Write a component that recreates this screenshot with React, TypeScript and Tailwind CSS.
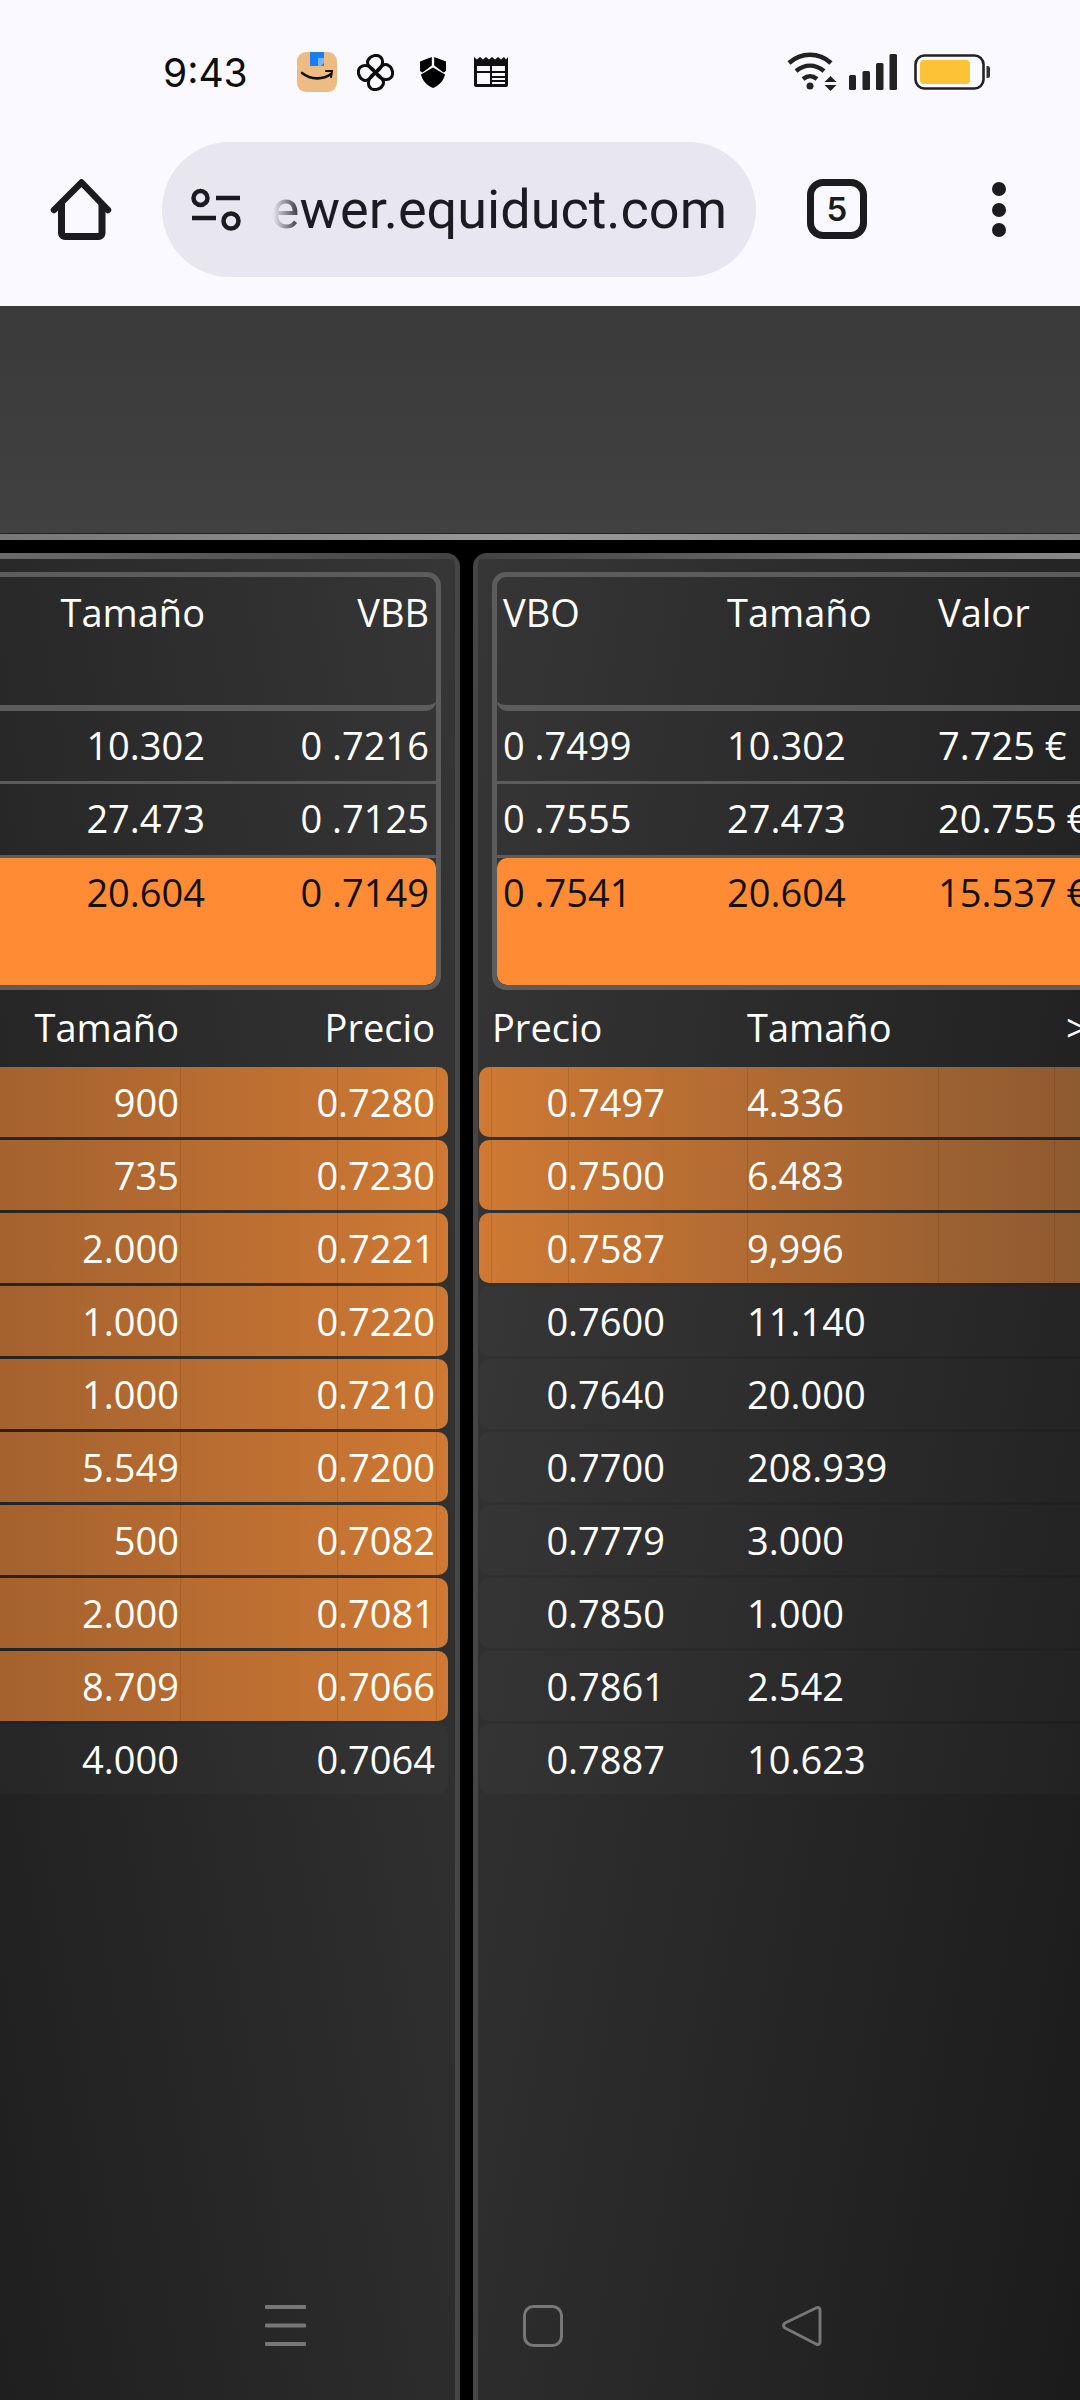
import type { ReactNode } from "react";
import clsx from "clsx";

const FONT = "font-['Open_Sans',sans-serif]";

const bids = [
  ["900", "0.7280"],
  ["735", "0.7230"],
  ["2.000", "0.7221"],
  ["1.000", "0.7220"],
  ["1.000", "0.7210"],
  ["5.549", "0.7200"],
  ["500", "0.7082"],
  ["2.000", "0.7081"],
  ["8.709", "0.7066"],
  ["4.000", "0.7064"],
];

const asks = [
  ["0.7497", "4.336"],
  ["0.7500", "6.483"],
  ["0.7587", "9,996"],
  ["0.7600", "11.140"],
  ["0.7640", "20.000"],
  ["0.7700", "208.939"],
  ["0.7779", "3.000"],
  ["0.7850", "1.000"],
  ["0.7861", "2.542"],
  ["0.7887", "10.623"],
];

const leftTop = [
  ["10.302", "0 .7216"],
  ["27.473", "0 .7125"],
  ["20.604", "0 .7149"],
];

const rightTop = [
  ["0 .7499", "10.302", "7.725 €"],
  ["0 .7555", "27.473", "20.755 €"],
  ["0 .7541", "20.604", "15.537 €"],
];

const BID_LINES = ["left-[180px]", "left-[337px]", "left-[436px]"];
const ASK_LINES = ["left-[12px]", "left-[89px]", "left-[268px]", "left-[459px]", "left-[575px]"];

function StatusBar() {
  return (
    <div className="flex h-[140px] items-center bg-[#f9f9ff] pl-[163px] pt-[4px]">
      <span className="w-[134px] font-['Inter',sans-serif] text-[39px] leading-none text-[#0d0d0d]">9:43</span>
      <svg width="40" height="40" viewBox="0 0 40 40" className="mr-[20px]">
        <rect width="40" height="40" rx="9" fill="#eebc82" />
        <path d="M13 0h14v14h-14z" fill="#1a7df0" />
        <path d="M21 6h6v5l-3 3h-3z" fill="#7db4f8" />
        <path d="M5 21c9 7 21 7 29 1" fill="none" stroke="#111" strokeWidth="2.6" strokeLinecap="round" />
        <path d="M29 19l6 0-1 6" fill="none" stroke="#111" strokeWidth="2" strokeLinecap="round" />
      </svg>
      <svg width="37" height="37" viewBox="0 0 37 37" fill="none" stroke="#0d0d0d" strokeWidth="3" className="mr-[26px]">
        {[0, 90, 180, 270].map((deg) => (
          <path
            key={deg}
            d="M0 0C-6-5-10-9-7-13C-5-17 2-18.500 5-15.500C9-12 7-4 0 0z"
            transform={`translate(18.5 18.5) rotate(${deg})`}
            strokeLinejoin="round"
          />
        ))}
      </svg>
      <svg width="26" height="31" viewBox="0 0 26 31" className="mr-[28px]">
        <path d="M0 4.500 11.800 0v8.500L2.500 15.500 0 14z M14.200 0 26 4.500V14l-2.500 1.500-9.300-7z" fill="#000" />
        <path d="M1 17.500 13 10.500l12 7C23.500 24 19 28.500 13 31 7 28.500 2.500 24 1 17.500z" fill="#000" />
      </svg>
      <svg width="34" height="30" viewBox="0 0 34 30">
        <path d="M0 0 3 2.500 6 0l3 2.500L12 0l3 2.500L18 0l3 2.500L24 0l3 2.500L30 0l2 2.500L34 0v28a2 2 0 0 1-2 2H2a2 2 0 0 1-2-2z" fill="#111" />
        <rect x="3" y="9" width="28" height="18" fill="#f9f9ff" />
        <rect x="3" y="14" width="28" height="2" fill="#111" />
        <rect x="16" y="9" width="2" height="18" fill="#111" />
        <rect x="18" y="19" width="13" height="2" fill="#111" />
        <rect x="18" y="23" width="13" height="2" fill="#111" />
      </svg>
      <div className="ml-[279px] flex items-center">
        <svg width="50" height="40" viewBox="0 0 50 40" className="mr-[12px]" fill="none" stroke="#222" strokeWidth="4.5">
          <path d="M2 11C14 0 32 0 44 11" />
          <path d="M9 19c9-7 19-7 28 0" />
          <path d="M16 27c5-4 9-4 14 0" />
          <circle cx="23" cy="34" r="3.5" fill="#222" stroke="none" />
          <path d="M43.500 24l6 6h-12z M37.500 33h12l-6 6z" fill="#222" stroke="none" />
        </svg>
        <svg width="48" height="36" viewBox="0 0 48 36" className="mr-[17px]" fill="#222">
          <rect x="0" y="21" width="7" height="15" rx="1.5" />
          <rect x="13.5" y="17" width="7.5" height="19" rx="1.5" />
          <rect x="27" y="9" width="7.5" height="27" rx="1.5" />
          <rect x="40.5" y="0" width="7.5" height="36" rx="1.5" />
        </svg>
        <svg width="76" height="36" viewBox="0 0 76 36">
          <rect x="1.5" y="1.5" width="68" height="33" rx="9" fill="none" stroke="#222" strokeWidth="2.6" />
          <rect x="6" y="6" width="50" height="24" rx="4" fill="#fdc336" />
          <path d="M72.500 12h1a2.500 2.500 0 0 1 2.500 2.500v7a2.500 2.500 0 0 1-2.500 2.500h-1z" fill="#333" />
        </svg>
      </div>
    </div>
  );
}

function BrowserBar() {
  return (
    <div className="flex h-[166px] items-start bg-[#f9f9ff] pl-[50px] pt-[2px]">
      <svg width="62" height="64" viewBox="0 0 62 64" className="mr-[50px] mt-[36px]">
        <path d="M31.500 4.500 4 32M31.500 4.500 58 32" fill="none" stroke="#1b1b20" strokeWidth="6.5" strokeLinecap="round" />
        <path d="M11.500 26v29a3.500 3.500 0 0 0 3.500 3.500h33.500a3.500 3.500 0 0 0 3.500-3.500V26" fill="none" stroke="#1b1b20" strokeWidth="7" />
      </svg>
      <div className="flex h-[135px] w-[594px] items-center rounded-full bg-[#e8e6f0] pl-[29px]">
        <svg width="50" height="44" viewBox="0 0 50 44" className="mr-[32px] shrink-0" fill="none" stroke="#1b1b20" strokeWidth="4.5">
          <circle cx="9.5" cy="10" r="7" />
          <path d="M25 10h24" />
          <path d="M1 30h24" />
          <circle cx="40" cy="33" r="7.5" />
        </svg>
        <div className="relative flex w-[454px] shrink-0 justify-end overflow-hidden whitespace-nowrap font-['Roboto',sans-serif] text-[54px] leading-[64px] text-[#1c1b21]">
          <span className="shrink-0">ewer.equiduct.com</span>
          <div className="absolute inset-y-0 left-0 w-[30px] bg-gradient-to-r from-[#e8e6f0] to-transparent" />
        </div>
      </div>
      <div className="ml-[51px] mt-[37px] flex h-[60px] w-[60px] items-center justify-center rounded-[16px] border-[7px] border-[#1b1b20] font-['Inter',sans-serif] text-[33px] font-semibold text-[#1b1b20]">
        5
      </div>
      <div className="ml-[125px] mt-[40px] flex flex-col gap-[6.5px]">
        <span className="h-[14px] w-[14px] rounded-full bg-[#1b1b20]" />
        <span className="h-[14px] w-[14px] rounded-full bg-[#1b1b20]" />
        <span className="h-[14px] w-[14px] rounded-full bg-[#1b1b20]" />
      </div>
    </div>
  );
}

function Cell({ className, children }: { className?: string; children?: ReactNode }) {
  return <div className={clsx("shrink-0 whitespace-nowrap", className)}>{children}</div>;
}

function RowLines({ lines }: { lines: string[] }) {
  return (
    <>
      {lines.map((pos) => (
        <span key={pos} className={clsx("absolute inset-y-0 w-px bg-black/10", pos)} />
      ))}
    </>
  );
}

function LeftPanel() {
  return (
    <div className="flex h-full w-[460px] shrink-0 flex-col overflow-hidden rounded-tr-[14px] border-r-[5px] border-[#454545] bg-[linear-gradient(80deg,#1f1f1f,#363636)]">
      <div className="h-[6px] shrink-0 bg-gradient-to-r from-[#6a6a6a] to-[#434343]" />
      <div className="mr-[14px] mt-[13px] overflow-hidden rounded-r-[14px] border-y-[5px] border-r-[5px] border-[#5c5c5c]">
        <div className="flex h-[134px] rounded-br-[10px] border-b-[6px] border-[#5c5c5c] pt-[10px]">
          <Cell className="w-[205px] text-right">Tamaño</Cell>
          <Cell className="w-[224px] text-right">VBB</Cell>
        </div>
        {leftTop.map(([size, vbb], i) => (
          <div
            key={vbb}
            className={clsx(
              "flex pt-[9px]",
              i === 0 && "h-[73px] border-b-[3px] border-[#5c5c5c]",
              i === 1 && "h-[74px] border-b-[3px] border-[#5c5c5c]",
              i === 2 && "h-[127px] rounded-r-[10px] bg-[#ff8c35] text-[#111]",
            )}
          >
            <Cell className="w-[205px] text-right">{size}</Cell>
            <Cell className="w-[224px] text-right">{vbb}</Cell>
          </div>
        ))}
      </div>
      <div className="flex h-[77px] shrink-0 items-center pb-[4px]">
        <Cell className="w-[179px] text-right">Tamaño</Cell>
        <Cell className="w-[256px] text-right">Precio</Cell>
      </div>
      <div className="mr-[7px] flex flex-col gap-[3px]">
        {bids.map(([size, price], i) => (
          <div
            key={i}
            className={clsx(
              "relative flex h-[70px] items-center overflow-hidden rounded-r-[10px]",
              i < 9 ? "bg-gradient-to-r from-[#a4622f] to-[#cf7933]" : "bg-white/[0.02]",
            )}
          >
            {i < 9 && <RowLines lines={BID_LINES} />}
            <Cell className="w-[179px] text-right">{size}</Cell>
            <Cell className="w-[256px] text-right">{price}</Cell>
          </div>
        ))}
      </div>
    </div>
  );
}

function RightPanel() {
  return (
    <div className="flex h-full min-w-0 flex-1 flex-col overflow-hidden rounded-tl-[14px] border-l-[5px] border-[#454545] bg-[linear-gradient(100deg,#363636,#1b1b1b)]">
      <div className="h-[6px] shrink-0 bg-gradient-to-r from-[#434343] to-[#8a8a8a]" />
      <div className="ml-[14px] mt-[13px] w-[800px] overflow-hidden rounded-l-[14px] border-y-[5px] border-l-[5px] border-[#5c5c5c]">
        <div className="flex h-[134px] rounded-bl-[10px] border-b-[6px] border-[#5c5c5c] pt-[10px]">
          <Cell className="w-[230px] pl-[6px]">VBO</Cell>
          <Cell className="w-[211px]">Tamaño</Cell>
          <Cell>Valor</Cell>
        </div>
        {rightTop.map(([vbo, size, value], i) => (
          <div
            key={vbo}
            className={clsx(
              "flex pt-[9px]",
              i === 0 && "h-[73px] border-b-[3px] border-[#5c5c5c]",
              i === 1 && "h-[74px] border-b-[3px] border-[#5c5c5c]",
              i === 2 && "h-[127px] rounded-l-[10px] bg-[#ff8c35] text-[#111]",
            )}
          >
            <Cell className="w-[230px] pl-[6px]">{vbo}</Cell>
            <Cell className="w-[211px]">{size}</Cell>
            <Cell>{value}</Cell>
          </div>
        ))}
      </div>
      <div className="flex h-[77px] shrink-0 items-center pb-[4px]">
        <Cell className="w-[269px] pl-[14px]">Precio</Cell>
        <Cell className="w-[319px]">Tamaño</Cell>
        <Cell>&gt;</Cell>
      </div>
      <div className="ml-[1px] flex flex-col gap-[3px]">
        {asks.map(([price, size], i) => (
          <div
            key={price}
            className={clsx(
              "relative flex h-[70px] items-center overflow-hidden rounded-l-[10px]",
              i < 3 ? "bg-gradient-to-r from-[#cf7933] to-[#8e5a30]" : "bg-white/[0.02]",
            )}
          >
            {i < 3 && <RowLines lines={ASK_LINES} />}
            <Cell className="w-[186px] text-right">{price}</Cell>
            <Cell className="pl-[82px]">{size}</Cell>
          </div>
        ))}
      </div>
    </div>
  );
}

export default function App() {
  return (
    <div className={clsx("relative h-[2400px] w-[1080px] overflow-hidden bg-black text-[38px] leading-[50px] text-white", FONT)}>
      <StatusBar />
      <BrowserBar />
      <div className="h-[227px] bg-gradient-to-b from-[#3a3a3a] to-[#414141]" />
      <div className="h-[7px] border-t border-[#222] bg-gradient-to-r from-[#777] via-[#999] to-[#777]" />
      <div className="h-[13px] bg-black" />
      <div className="flex h-[1847px] gap-[13px]">
        <LeftPanel />
        <RightPanel />
      </div>
      {/* system nav buttons sit on top of the page */}
      <svg width="42" height="42" viewBox="0 0 42 42" className="absolute left-[265px] top-[2305px]" fill="#777">
        <rect y="0" width="41" height="4" rx="1" />
        <rect y="18.5" width="41" height="4" rx="1" />
        <rect y="37" width="41" height="4" rx="1" />
      </svg>
      <svg width="42" height="42" viewBox="0 0 42 42" className="absolute left-[522px] top-[2305px]" fill="none" stroke="#777" strokeWidth="3">
        <rect x="2.5" y="1.5" width="37" height="39" rx="9" />
      </svg>
      <svg width="42" height="42" viewBox="0 0 42 42" className="absolute left-[780px] top-[2305px]" fill="none" stroke="#777" strokeWidth="3" strokeLinejoin="round">
        <path d="M36 3 5 18Q2 20.500 5 23L36 39Q40 40.500 40 37V5Q40 1.500 36 3z" />
      </svg>
    </div>
  );
}
